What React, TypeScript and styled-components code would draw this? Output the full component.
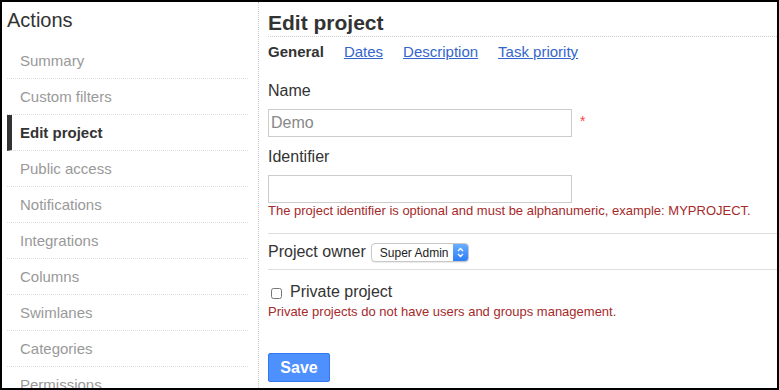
import styled, { createGlobalStyle } from "styled-components";

const GlobalStyle = createGlobalStyle`
  html, body {
    margin: 0;
    padding: 0;
    background: #fff;
  }
  body {
    font-family: "Liberation Sans", Arial, sans-serif;
    color: #333;
  }
`;

const Frame = styled.div`
  box-sizing: border-box;
  width: 779px;
  height: 390px;
  border: 2px solid #000;
  overflow: hidden;
  display: flex;
  padding-left: 5px;
  background: #fff;
`;

const Sidebar = styled.div`
  width: 241px;
  flex-shrink: 0;
  margin-right: 10px;
`;

const SidebarTitle = styled.h2`
  margin: 0;
  height: 41px;
  line-height: 36px;
  font-size: 20px;
  font-weight: normal;
  color: #333;
`;

const MenuList = styled.ul`
  list-style: none;
  margin: 0;
  padding: 0;
`;

const MenuItem = styled.li<{ $active?: boolean }>`
  height: 35px;
  line-height: 35px;
  border-bottom: 1px dotted #ddd;
  font-size: 15px;
  padding-left: ${(p) => (p.$active ? "8px" : "13px")};
  border-left: ${(p) => (p.$active ? "5px solid #333" : "none")};
  color: ${(p) => (p.$active ? "#333" : "#999")};
  font-weight: ${(p) => (p.$active ? "bold" : "normal")};
`;

const Content = styled.div`
  flex: 1;
  border-left: 1px dotted #ccc;
  padding-left: 9px;
  display: flex;
  flex-direction: column;
`;

const PageHeader = styled.div`
  border-bottom: 1px dotted #ccc;
  padding-top: 7px;
`;

const PageTitle = styled.h2`
  margin: 0;
  font-size: 21px;
  line-height: 27px;
  font-weight: bold;
  color: #333;
`;

const Tabs = styled.div`
  display: flex;
  gap: 20px;
  margin-top: 5px;
  line-height: 20px;
  font-size: 15px;
`;

const Tab = styled.a<{ $active?: boolean }>`
  color: ${(p) => (p.$active ? "#333" : "#3366cc")};
  font-weight: ${(p) => (p.$active ? "bold" : "normal")};
  text-decoration: ${(p) => (p.$active ? "none" : "underline")};
  cursor: pointer;
`;

const Label = styled.label<{ $top: number }>`
  display: block;
  margin-top: ${(p) => p.$top}px;
  font-size: 16px;
  line-height: 20px;
  color: #333;
`;

const InputRow = styled.div`
  display: flex;
  align-items: center;
  margin-top: 8px;
`;

const TextInput = styled.input`
  box-sizing: border-box;
  width: 304px;
  height: 28px;
  border: 1px solid #ccc;
  padding: 0 2px;
  font-family: "Liberation Sans", Arial, sans-serif;
  font-size: 16px;
  color: #888;
  outline: none;
`;

const Required = styled.span`
  color: #f44;
  font-size: 14px;
  margin-left: 8px;
  margin-top: -4px;
`;

const Help = styled.div<{ $top?: number }>`
  margin-top: ${(p) => p.$top ?? 0}px;
  font-size: 13px;
  line-height: 16px;
  color: #a52a2a;
`;

const Rule = styled.div<{ $top?: number }>`
  margin-top: ${(p) => p.$top ?? 0}px;
  border-top: 1px solid #ddd;
`;

const OwnerRow = styled.div`
  display: flex;
  align-items: center;
  height: 35px;
  gap: 5px;
`;

const OwnerLabel = styled.span`
  font-size: 16px;
  color: #333;
`;

const Select = styled.div`
  box-sizing: border-box;
  width: 98px;
  height: 19px;
  display: flex;
  align-items: center;
  border: 1px solid #c8c8c8;
  border-radius: 4px;
  background: #fff;
  overflow: hidden;
  box-shadow: 0 1px 1px rgba(0, 0, 0, 0.08);
  margin-top: 2px;
`;

const SelectText = styled.span`
  flex: 1;
  padding-left: 8px;
  font-size: 12px;
  color: #222;
`;

const Stepper = styled.span`
  width: 15px;
  height: 100%;
  display: flex;
  align-items: center;
  justify-content: center;
  background: linear-gradient(#6aaeff, #2d7ef5);
`;

const CheckRow = styled.label`
  display: flex;
  align-items: center;
  margin-top: 12px;
  font-size: 16px;
  line-height: 20px;
  color: #333;
`;

const Checkbox = styled.input`
  margin: 2px 8px 0 3px;
  width: 11px;
  height: 11px;
`;

const SaveButton = styled.button`
  align-self: flex-start;
  margin-top: 33px;
  width: 62px;
  height: 29px;
  border: 1px solid #3079ed;
  border-radius: 2px;
  background: #4d90fe;
  color: #fff;
  font-family: "Liberation Sans", Arial, sans-serif;
  font-size: 16px;
  font-weight: bold;
  padding: 0;
`;

const menu = [
  "Summary",
  "Custom filters",
  "Edit project",
  "Public access",
  "Notifications",
  "Integrations",
  "Columns",
  "Swimlanes",
  "Categories",
  "Permissions",
];

export default function App() {
  return (
    <>
      <GlobalStyle />
      <Frame>
        <Sidebar>
          <SidebarTitle>Actions</SidebarTitle>
          <MenuList>
            {menu.map((m) => (
              <MenuItem key={m} $active={m === "Edit project"}>
                {m}
              </MenuItem>
            ))}
          </MenuList>
        </Sidebar>
        <Content>
          <PageHeader>
            <PageTitle>Edit project</PageTitle>
          </PageHeader>
          <Tabs>
            <Tab $active>General</Tab>
            <Tab>Dates</Tab>
            <Tab>Description</Tab>
            <Tab>Task priority</Tab>
          </Tabs>
          <Label $top={19}>Name</Label>
          <InputRow>
            <TextInput defaultValue="Demo" />
            <Required>*</Required>
          </InputRow>
          <Label $top={10}>Identifier</Label>
          <InputRow>
            <TextInput />
          </InputRow>
          <Help>The project identifier is optional and must be alphanumeric, example: MYPROJECT.</Help>
          <Rule $top={14} />
          <OwnerRow>
            <OwnerLabel>Project owner</OwnerLabel>
            <Select>
              <SelectText>Super Admin</SelectText>
              <Stepper>
                <svg width="7" height="11" viewBox="0 0 7 11" fill="none" stroke="#fff" strokeWidth="1.3">
                  <path d="M1 4 L3.5 1.5 L6 4" />
                  <path d="M1 7 L3.5 9.5 L6 7" />
                </svg>
              </Stepper>
            </Select>
          </OwnerRow>
          <Rule />
          <CheckRow>
            <Checkbox type="checkbox" />
            Private project
          </CheckRow>
          <Help $top={2}>Private projects do not have users and groups management.</Help>
          <SaveButton>Save</SaveButton>
        </Content>
      </Frame>
    </>
  );
}
